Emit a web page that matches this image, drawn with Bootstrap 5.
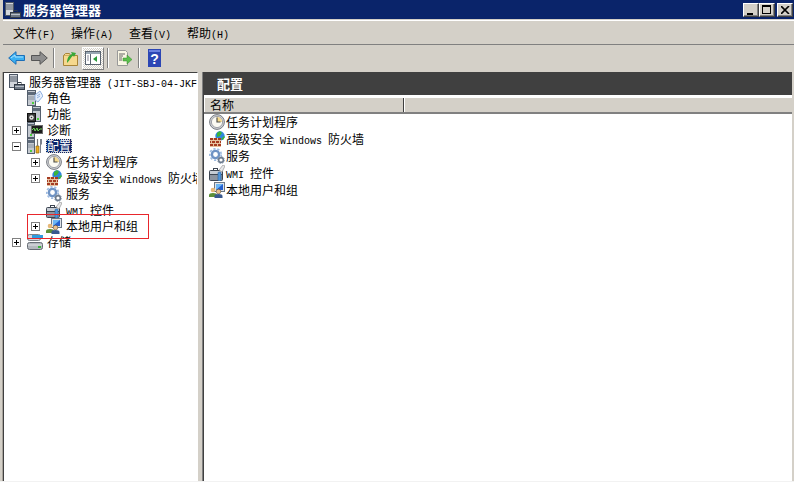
<!DOCTYPE html>
<html lang="zh"><head><meta charset="utf-8"><title>服务器管理器</title>
<link href="https://cdn.jsdelivr.net/npm/bootstrap@5.3.0/dist/css/bootstrap.min.css" rel="stylesheet">
<style>
html,body{margin:0;height:482px;overflow:hidden;background:#fff}
body{font:12px/16px "Noto Sans CJK SC",sans-serif;color:#000}
.lat{font:10px "Liberation Mono",monospace;white-space:pre}
.win{width:794px;height:482px;background:#d4d0c8;padding:0 0 0 3px;border-bottom:1px solid #f2f2f2}
.ttl{height:19px;background:#0a246a;color:#fff;font-weight:700;font-size:13px;line-height:19px;padding-left:2px}
.ttl .lbl{margin-left:2px}
.wb{width:16px;height:14px;background:#d4d0c8;border:1px solid;border-color:#fff #404040 #404040 #fff;box-shadow:inset -1px -1px #808080}
.wbs{margin-right:1px}
.wbs .wb:last-child{margin-left:2px}
.mnu{height:25px;margin-top:1px;border-top:1px solid #fff;border-bottom:1px solid #808080;padding-left:10px;gap:16px;align-items:center;line-height:20px}
.tb{height:26px;padding-left:2px;align-items:center}
.sep{width:2px;height:20px;border-left:1px solid #808080;border-right:1px solid #fff;margin:0 4px 0 2px}
.tbi{width:22px;height:23px;margin-right:1px;display:flex;align-items:center;justify-content:center}
.tbi.on{background:repeating-conic-gradient(#fff 0 25%,#d4d0c8 0 50%) 0 0/2px 2px;border:1px solid;border-color:#fff #808080 #808080 #fff}
.panes{height:409px;margin-top:1px}
.lp{width:195px;background:#fff;border:solid;border-width:1px 1px 0 1px;border-color:#404040 #fff #fff #404040;padding-top:1px;position:relative;overflow:hidden;flex:none;box-shadow:-1px 0 #a8a49c}
.rp{flex:1;margin-left:5px;background:#fff;border-left:1px solid #404040;box-shadow:-1px 0 #808080;display:flex;flex-direction:column;min-width:0}
.trow{height:16px;display:flex;align-items:center;white-space:nowrap;line-height:16px}
.slot{flex:none;display:flex;align-items:center}
.s0{width:5px}
.s1{width:23px;padding-left:8px}
.s2{width:42px;padding-left:27px}
.exp{width:9px;height:9px;border:1px solid #808080;background:#fff;flex:none;position:relative}
.exp::before{content:"";position:absolute;left:1px;top:3px;width:5px;height:1px;background:#000}
.exp.pl::after{content:"";position:absolute;left:3px;top:1px;width:1px;height:5px;background:#000}
.ic{width:16px;height:16px;flex:none}
.trow .ic{margin-right:4px}
.hd{height:23px;background:#404040;color:#fff;font-weight:700;font-size:13px;line-height:23px;padding-left:14px;flex:none;margin-left:-1px}
.colh{height:17px;margin-top:2px;display:flex;flex:none;background:#d4d0c8;border-top:1px solid #fff;border-bottom:2px solid #808080;line-height:14px}
.colh div:first-child{width:200px;padding-left:5px;border-right:1px solid #404040;border-left:1px solid #fff;box-shadow:1px 0 #fff}
.lst{margin-top:-1px}
.lrow{height:17px;display:flex;align-items:center;padding-left:5px;white-space:nowrap}
.lrow .ic{margin-right:1px}
.sel{background:#0a246a;color:#fff;outline:1px dotted #d4d0c8;outline-offset:-1px;padding:0 1px;line-height:14px;margin-left:-1px}
.rb{position:absolute;left:23px;top:141px;width:122px;height:25px;border:1px solid #e8262c}
.rsb{width:2px;background:#d4d0c8;flex:none}
</style></head>
<body>
<svg width="0" height="0" class="position-absolute">
<defs>
<symbol id="srv" viewBox="0 0 16 16"><rect x=".5" y=".5" width="8" height="13" fill="#d2d6dc" stroke="#4c5664"/><path d="M1 3h7M1 5h7M1 7h7" stroke="#4c5664"/><rect x="5.500" y="10.500" width="10" height="5" fill="#6f7986" stroke="#333b46"/><path d="M6 12.500h9" stroke="#b9c0c8"/><rect x="9" y="8.500" width="3" height="2" fill="none" stroke="#333b46"/></symbol>
<symbol id="role" viewBox="0 0 16 16"><rect x=".5" y=".5" width="8" height="15" fill="#c4c9d0" stroke="#55606e"/><path d="M1 2h7v3H1z" fill="#5f6b7a"/><path d="M1 7h7M1 9h7" stroke="#8a94a0"/><rect x="5" y="12" width="2" height="2" fill="#4bd03c"/><path d="M8 5l5-4 3 5-5 6-3-2z" fill="#e6effc" stroke="#8fb0e0"/><path d="M10 6l3-2M10 8l3-2" stroke="#8fb0e0"/></symbol>
<symbol id="feat" viewBox="0 0 16 16"><rect x="5.500" y=".5" width="8" height="15" fill="#c4c9d0" stroke="#55606e"/><path d="M6 2h7v3H6z" fill="#5f6b7a"/><rect x=".5" y="7.500" width="8" height="8" fill="#3a3a3a" stroke="#111"/><circle cx="4.500" cy="11.500" r="2.200" fill="#e8e8e8"/><circle cx="4.500" cy="11.500" r=".8" fill="#333"/><rect x="10" y="12" width="2" height="2" fill="#4bd03c"/></symbol>
<symbol id="diag" viewBox="0 0 16 16"><rect x=".5" y=".5" width="7" height="15" fill="#c4c9d0" stroke="#55606e"/><path d="M1 2h6v2H1z" fill="#5f6b7a"/><rect x="4.500" y="3.500" width="11" height="8" fill="#1c1c1c" stroke="#6c6c6c"/><path d="M5 8l2-2 1 3 2-3 1 3 2-2 2 0" fill="none" stroke="#6ed85a"/><rect x="3" y="12" width="2" height="2" fill="#4bd03c"/></symbol>
<symbol id="conf" viewBox="0 0 16 16"><rect x=".5" y=".5" width="7" height="15" fill="#c4c9d0" stroke="#55606e"/><path d="M1 2h6v3H1z" fill="#5f6b7a"/><path d="M1 7h6M1 9h6" stroke="#8a94a0"/><rect x="3" y="12" width="2" height="2" fill="#4bd03c"/><path d="M9 8h3v7H9z" fill="#f0b020" stroke="#8a6410" stroke-width=".7"/><path d="M10.500 1v7" stroke="#777" stroke-width="1.200"/><path d="M13 1l2 0v5l-1 1v8h-1z" fill="#7c828c"/></symbol>
<symbol id="clk" viewBox="0 0 16 16"><circle cx="8" cy="8" r="7.400" fill="#d2d4d8" stroke="#767a80"/><circle cx="8" cy="8" r="5.600" fill="#fbfaf2" stroke="#a0a2a8"/><path d="M8 8V3a5 5 0 0 1 5 5z" fill="#f5d98c"/><path d="M8 3.500V8h3.500" fill="none" stroke="#50504a" stroke-width="1.200"/></symbol>
<symbol id="fw" viewBox="0 0 16 16"><circle cx="11" cy="5" r="4.700" fill="#2f86de"/><path d="M8 2l3-2 2 2-2 3-3 1zM12 8l3-3 1 1-2 3z" fill="#3cb43c"/><path d="M1 7h11v9H1z" fill="#a53c22"/><path d="M1 9.500h11M1 12.500h11M1 15.500h11" stroke="#e6c2a0"/><path d="M4.500 7v2.500M8.500 7v2.500M2.500 9.500v3M6.500 9.500v3M10.500 9.500v3M4.500 12.500v3M8.500 12.500v3" stroke="#e6c2a0"/></symbol>
<symbol id="svc" viewBox="0 0 16 16"><circle cx="6.500" cy="6.500" r="3.600" fill="#fff" stroke="#6f93c4" stroke-width="2.400"/><circle cx="6.500" cy="6.500" r="5.700" fill="none" stroke="#9fbbe0" stroke-width="1.800" stroke-dasharray="2.200 1.800"/><circle cx="12" cy="12" r="2.400" fill="#fff" stroke="#6c7a8c" stroke-width="1.600"/><circle cx="12" cy="12" r="3.500" fill="none" stroke="#94a4b8" stroke-width="1" stroke-dasharray="1.500 1.200"/></symbol>
<symbol id="wmi" viewBox="0 0 16 16"><rect x=".5" y="5.500" width="13" height="10" rx="1" fill="#8c94a0" stroke="#3e4652"/><path d="M1 6h12v3H1z" fill="#c6ccd4"/><path d="M1 9.500h12" stroke="#3e4652"/><rect x="4.500" y="3.500" width="4" height="2" fill="none" stroke="#3e4652"/><path d="M10 5l4-5 2 1-3 6z" fill="#e8e8ea" stroke="#888" stroke-width=".6"/><rect x="9" y="7" width="3" height="9" rx="1" fill="#4f96dc" stroke="#2a5f9c" stroke-width=".6"/></symbol>
<symbol id="usr" viewBox="0 0 16 16"><rect x="5.500" y=".5" width="10" height="9" fill="#dfe3e8" stroke="#6a7684"/><path d="M7 2h7v6H7z" fill="#2460d0"/><path d="M7 2h7L7 8z" fill="#6cb6f4"/><circle cx="4" cy="8" r="2.300" fill="#e6b878"/><path d="M0 15v-2q0-2 4-2t4 2v2z" fill="#5e9038"/><circle cx="9.500" cy="9.500" r="2.300" fill="#e9c08c" stroke="#4c3820" stroke-width=".5"/><path d="M5.500 16v-2q0-2 4-2t4 2v2z" fill="#39598f"/></symbol>
<symbol id="stor" viewBox="0 0 16 16"><rect x=".5" y=".5" width="13" height="6" rx="2" fill="#d4d8dc" stroke="#7c8288"/><rect x="5" y="1" width="11" height="3" fill="#2f9be0"/><rect x=".5" y="8.500" width="15" height="7" rx="2" fill="#b4b8be" stroke="#666c74"/><path d="M1 11h14" stroke="#e4e6e8"/><rect x="11" y="12" width="3" height="2" fill="#3cb43c"/></symbol>
</defs></svg>
<div class="win">
 <div class="ttl d-flex align-items-center justify-content-between">
  <div class="d-flex align-items-center"><svg class="ic"><use href="#srv"/></svg><span class="lbl">服务器管理器</span></div>
  <div class="d-flex wbs">
   <div class="wb d-flex align-items-end justify-content-center"><svg width="8" height="10"><path d="M0 7h6v2H0z"/></svg></div>
   <div class="wb d-flex align-items-center justify-content-center"><svg width="10" height="9"><path d="M0 0h9v9H0zM1 2v6h7V2z" fill-rule="evenodd"/></svg></div>
   <div class="wb d-flex align-items-center justify-content-center"><svg width="9" height="8"><path d="M0 0l8 8M8 0L0 8" stroke="#000" stroke-width="1.600"/></svg></div>
  </div>
 </div>
 <div class="mnu d-flex"><span>文件<span class="lat">(F)</span></span><span>操作<span class="lat">(A)</span></span><span>查看<span class="lat">(V)</span></span><span>帮助<span class="lat">(H)</span></span></div>
 <div class="tb d-flex">
  <div class="tbi"><svg width="17" height="14"><path d="M.7 7L8 .7v3.800h8.500v5H8v3.800z" fill="#3bb0f2" stroke="#1c6fb8"/><path d="M3 7l4-3v2h8" fill="none" stroke="#a8e2ff"/></svg></div>
  <div class="tbi"><svg width="17" height="14"><path d="M16.300 7L9 .7v3.800H.5v5H9v3.800z" fill="#8e8e8e" stroke="#555"/></svg></div>
  <div class="sep"></div>
  <div class="tbi"><svg width="15" height="16"><path d="M.5 5.500h14v10H.5z" fill="#f6d88e" stroke="#a88438"/><path d="M.5 5.500l2-2h4l1 2" fill="#f6d88e" stroke="#a88438"/><path d="M4 13c0-5 2-8 5-9l-1-2 5 1-2 4-1-1.500C8 7 7 10 4 13z" fill="#38a838"/></svg></div>
  <div class="tbi on"><svg width="16" height="14"><rect x=".5" y=".5" width="15" height="13" fill="#fff" stroke="#5a6470"/><path d="M1 1h14v2H1z" fill="#9aa8b4"/><path d="M5.500 3v10" stroke="#5a6470"/><path d="M2 5h2M2 7h2M2 9h2" stroke="#889"/><path d="M12 5v6l-4-3z" fill="#2a9a3a"/></svg></div>
  <div class="sep"></div>
  <div class="tbi"><svg width="16" height="16"><path d="M1.500 .5h8l2 2v13h-10z" fill="#faf6e4" stroke="#999"/><path d="M3 4h6M3 6h4M3 8h3M3 10h3" stroke="#666"/><path d="M7 8h4V5l5 4.500L11 14v-3H7z" fill="#5cc04c" stroke="#3a8a30" stroke-width=".5"/></svg></div>
  <div class="sep"></div>
  <div class="tbi"><svg width="14" height="18"><rect width="13" height="18" fill="#2c46b4"/><rect x="1" y="1" width="11" height="2" fill="#6a80e0"/><text x="6.500" y="14.500" text-anchor="middle" font-family="Liberation Sans" font-weight="700" font-size="14" fill="#fff">?</text></svg></div>
 </div>
 <div class="panes d-flex">
  <div class="lp">
   <div class="trow"><span class="slot s0"></span><svg class="ic"><use href="#srv"/></svg><span>服务器管理器<span class="lat"> (JIT-SBJ-04-JKF</span></span></div>
   <div class="trow"><span class="slot s1"></span><svg class="ic"><use href="#role"/></svg><span>角色</span></div>
   <div class="trow"><span class="slot s1"></span><svg class="ic"><use href="#feat"/></svg><span>功能</span></div>
   <div class="trow"><span class="slot s1"><i class="exp pl"></i></span><svg class="ic"><use href="#diag"/></svg><span>诊断</span></div>
   <div class="trow"><span class="slot s1"><i class="exp"></i></span><svg class="ic"><use href="#conf"/></svg><span class="sel">配置</span></div>
   <div class="trow"><span class="slot s2"><i class="exp pl"></i></span><svg class="ic"><use href="#clk"/></svg><span>任务计划程序</span></div>
   <div class="trow"><span class="slot s2"><i class="exp pl"></i></span><svg class="ic"><use href="#fw"/></svg><span>高级安全<span class="lat"> Windows </span>防火墙</span></div>
   <div class="trow"><span class="slot s2"></span><svg class="ic"><use href="#svc"/></svg><span>服务</span></div>
   <div class="trow"><span class="slot s2"></span><svg class="ic"><use href="#wmi"/></svg><span><span class="lat">WMI </span>控件</span></div>
   <div class="trow"><span class="slot s2"><i class="exp pl"></i></span><svg class="ic"><use href="#usr"/></svg><span>本地用户和组</span></div>
   <div class="trow"><span class="slot s1"><i class="exp pl"></i></span><svg class="ic"><use href="#stor"/></svg><span>存储</span></div>
   <div class="rb"></div>
  </div>
  <div class="rp">
   <div class="hd">配置</div>
   <div class="colh"><div>名称</div></div>
   <div class="lst">
    <div class="lrow"><svg class="ic"><use href="#clk"/></svg>任务计划程序</div>
    <div class="lrow"><svg class="ic"><use href="#fw"/></svg><span>高级安全<span class="lat"> Windows </span>防火墙</span></div>
    <div class="lrow"><svg class="ic"><use href="#svc"/></svg>服务</div>
    <div class="lrow"><svg class="ic"><use href="#wmi"/></svg><span><span class="lat">WMI </span>控件</span></div>
    <div class="lrow"><svg class="ic"><use href="#usr"/></svg>本地用户和组</div>
   </div>
  </div>
  <div class="rsb"></div>
 </div>
</div>
</body></html>
